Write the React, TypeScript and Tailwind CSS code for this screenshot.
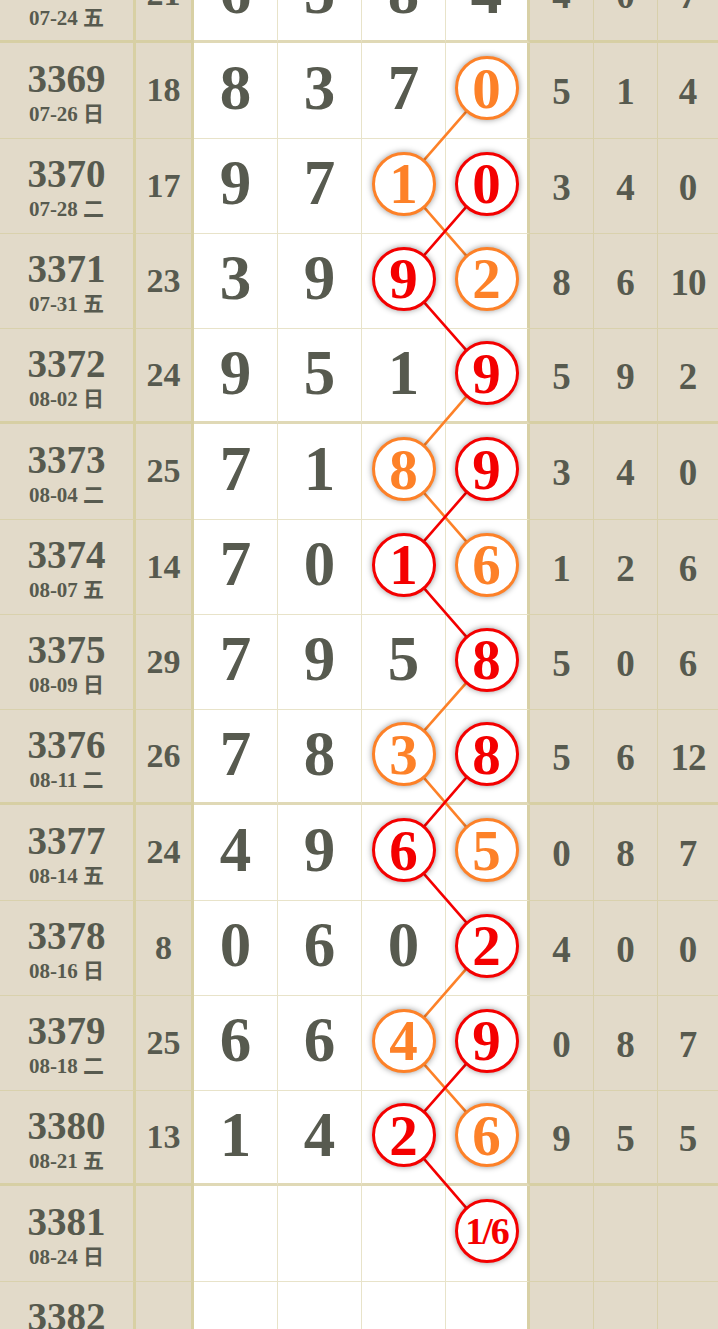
import React from "react";

type Circ = { v: string; c: "o" | "r" };
type Row = {
  p: string;
  d: string;
  s: string;
  n: string[];
  r: string[];
  c3?: Circ;
  c4?: Circ;
  thick?: boolean;
};

const RH = 95.25;

const rows: Row[] = [
  { p: "3368", d: "07-24 五", s: "21", n: ["6", "5", "8", "4"], r: ["4", "0", "7"], thick: true },
  { p: "3369", d: "07-26 日", s: "18", n: ["8", "3", "7", ""], r: ["5", "1", "4"], c4: { v: "0", c: "o" } },
  { p: "3370", d: "07-28 二", s: "17", n: ["9", "7", "", ""], r: ["3", "4", "0"], c3: { v: "1", c: "o" }, c4: { v: "0", c: "r" } },
  { p: "3371", d: "07-31 五", s: "23", n: ["3", "9", "", ""], r: ["8", "6", "10"], c3: { v: "9", c: "r" }, c4: { v: "2", c: "o" } },
  { p: "3372", d: "08-02 日", s: "24", n: ["9", "5", "1", ""], r: ["5", "9", "2"], c4: { v: "9", c: "r" }, thick: true },
  { p: "3373", d: "08-04 二", s: "25", n: ["7", "1", "", ""], r: ["3", "4", "0"], c3: { v: "8", c: "o" }, c4: { v: "9", c: "r" } },
  { p: "3374", d: "08-07 五", s: "14", n: ["7", "0", "", ""], r: ["1", "2", "6"], c3: { v: "1", c: "r" }, c4: { v: "6", c: "o" } },
  { p: "3375", d: "08-09 日", s: "29", n: ["7", "9", "5", ""], r: ["5", "0", "6"], c4: { v: "8", c: "r" } },
  { p: "3376", d: "08-11 二", s: "26", n: ["7", "8", "", ""], r: ["5", "6", "12"], c3: { v: "3", c: "o" }, c4: { v: "8", c: "r" }, thick: true },
  { p: "3377", d: "08-14 五", s: "24", n: ["4", "9", "", ""], r: ["0", "8", "7"], c3: { v: "6", c: "r" }, c4: { v: "5", c: "o" } },
  { p: "3378", d: "08-16 日", s: "8", n: ["0", "6", "0", ""], r: ["4", "0", "0"], c4: { v: "2", c: "r" } },
  { p: "3379", d: "08-18 二", s: "25", n: ["6", "6", "", ""], r: ["0", "8", "7"], c3: { v: "4", c: "o" }, c4: { v: "9", c: "r" } },
  { p: "3380", d: "08-21 五", s: "13", n: ["1", "4", "", ""], r: ["9", "5", "5"], c3: { v: "2", c: "r" }, c4: { v: "6", c: "o" }, thick: true },
  { p: "3381", d: "08-24 日", s: "", n: ["", "", "", ""], r: ["", "", ""], c4: { v: "1/6", c: "r" } },
  { p: "3382", d: "08-26 二", s: "", n: ["", "", "", ""], r: ["", "", ""] },
];

// links: [fromRow, fromCol, toRow, toCol, color]
const links: [number, number, number, number, "o" | "r"][] = [
  [1, 4, 2, 3, "o"],
  [2, 3, 3, 4, "o"],
  [4, 4, 5, 3, "o"],
  [5, 3, 6, 4, "o"],
  [7, 4, 8, 3, "o"],
  [8, 3, 9, 4, "o"],
  [10, 4, 11, 3, "o"],
  [11, 3, 12, 4, "o"],
  [2, 4, 3, 3, "r"],
  [3, 3, 4, 4, "r"],
  [5, 4, 6, 3, "r"],
  [6, 3, 7, 4, "r"],
  [8, 4, 9, 3, "r"],
  [9, 3, 10, 4, "r"],
  [11, 4, 12, 3, "r"],
  [12, 3, 13, 4, "r"],
];

const cx = (col: number) => (col === 3 ? 403.5 : 486.5);
const cy = (k: number) => {
  const b = rows[k].thick ? 3 : 1;
  return RH * k + (RH - b) / 2 - 2;
};

function Circle({ c }: { c: Circ }) {
  const color =
    c.c === "o"
      ? "border-[#fd8128] text-[#fd8128]"
      : "border-[#f40000] text-[#f40000]";
  const size = c.v.length > 1 ? "text-[38px] tracking-[-2px]" : "text-[57px]";
  return (
    <div
      className={`relative z-10 flex h-[64px] w-[64px] -translate-y-[2px] items-center justify-center rounded-full border-[3px] bg-white shadow-[0_0_6px_rgba(0,0,0,0.42)] ${color}`}
    >
      <span className={`font-bold leading-none ${size}`}>{c.v}</span>
    </div>
  );
}

export default function App() {
  return (
    <div
      className="h-[1329px] w-[718px] overflow-hidden bg-white text-[#575a4f]"
      style={{ fontFamily: '"Liberation Serif", "Noto Sans CJK SC", serif' }}
    >
      <div className="relative mt-[-52px]">
        <svg
          className="absolute left-0 top-0"
          width={718}
          height={RH * rows.length}
          viewBox={`0 0 718 ${RH * rows.length}`}
        >
          {links.map(([a, ca, b, cb, col], i) => (
            <line
              key={i}
              x1={cx(ca)}
              y1={cy(a)}
              x2={cx(cb)}
              y2={cy(b)}
              stroke={col === "o" ? "#fd8128" : "#f40000"}
              strokeWidth={2.6}
            />
          ))}
        </svg>
        {rows.map((r, k) => {
          const bb = r.thick
            ? "border-b-[3px] border-b-[#d7cfa4]"
            : "border-b border-b-[#d9d1ad]";
          const bw = r.thick
            ? "border-b-[3px] border-b-[#e0d9b6]"
            : "border-b border-b-[#e8e3c9]";
          return (
            <div
              key={k}
              className="grid h-[95.25px] grid-cols-[136px_58px_84px_84px_84px_84px_64px_64px_60px]"
            >
              <div
                className={`flex flex-col items-center justify-center border-r-[3px] border-r-[#d8d0a4] bg-[#e2dac9] pt-[3px] font-bold ${bb}`}
              >
                <span className="text-[39px] leading-none">{r.p}</span>
                <span className="mt-[6px] text-[21px] leading-none">{r.d}</span>
              </div>
              <div
                className={`flex items-center justify-center border-r-[3px] border-r-[#d8d0a4] bg-[#e2dac9] text-[34px] font-bold leading-none ${bb}`}
              >
                {r.s}
              </div>
              {[0, 1, 2, 3].map((j) => {
                const circ = j === 2 ? r.c3 : j === 3 ? r.c4 : undefined;
                const br =
                  j === 3
                    ? "border-r-[3px] border-r-[#d8d0a6]"
                    : "border-r border-r-[#e8e3c9]";
                return (
                  <div
                    key={j}
                    className={`flex items-center justify-center bg-white ${br} ${bw}`}
                  >
                    {circ ? (
                      <Circle c={circ} />
                    ) : (
                      <span className="-translate-y-[2px] text-[63px] font-bold leading-none">
                        {r.n[j]}
                      </span>
                    )}
                  </div>
                );
              })}
              {[0, 1, 2].map((j) => (
                <div
                  key={j}
                  className={`flex items-center justify-center bg-[#e2dac9] pt-[3px] text-[37px] font-bold leading-none ${
                    j < 2 ? "border-r border-r-[#d8d0ab]" : ""
                  } ${bb}`}
                >
                  <span className={r.r[j].length > 1 ? "tracking-[-1px]" : ""}>
                    {r.r[j]}
                  </span>
                </div>
              ))}
            </div>
          );
        })}
      </div>
    </div>
  );
}
